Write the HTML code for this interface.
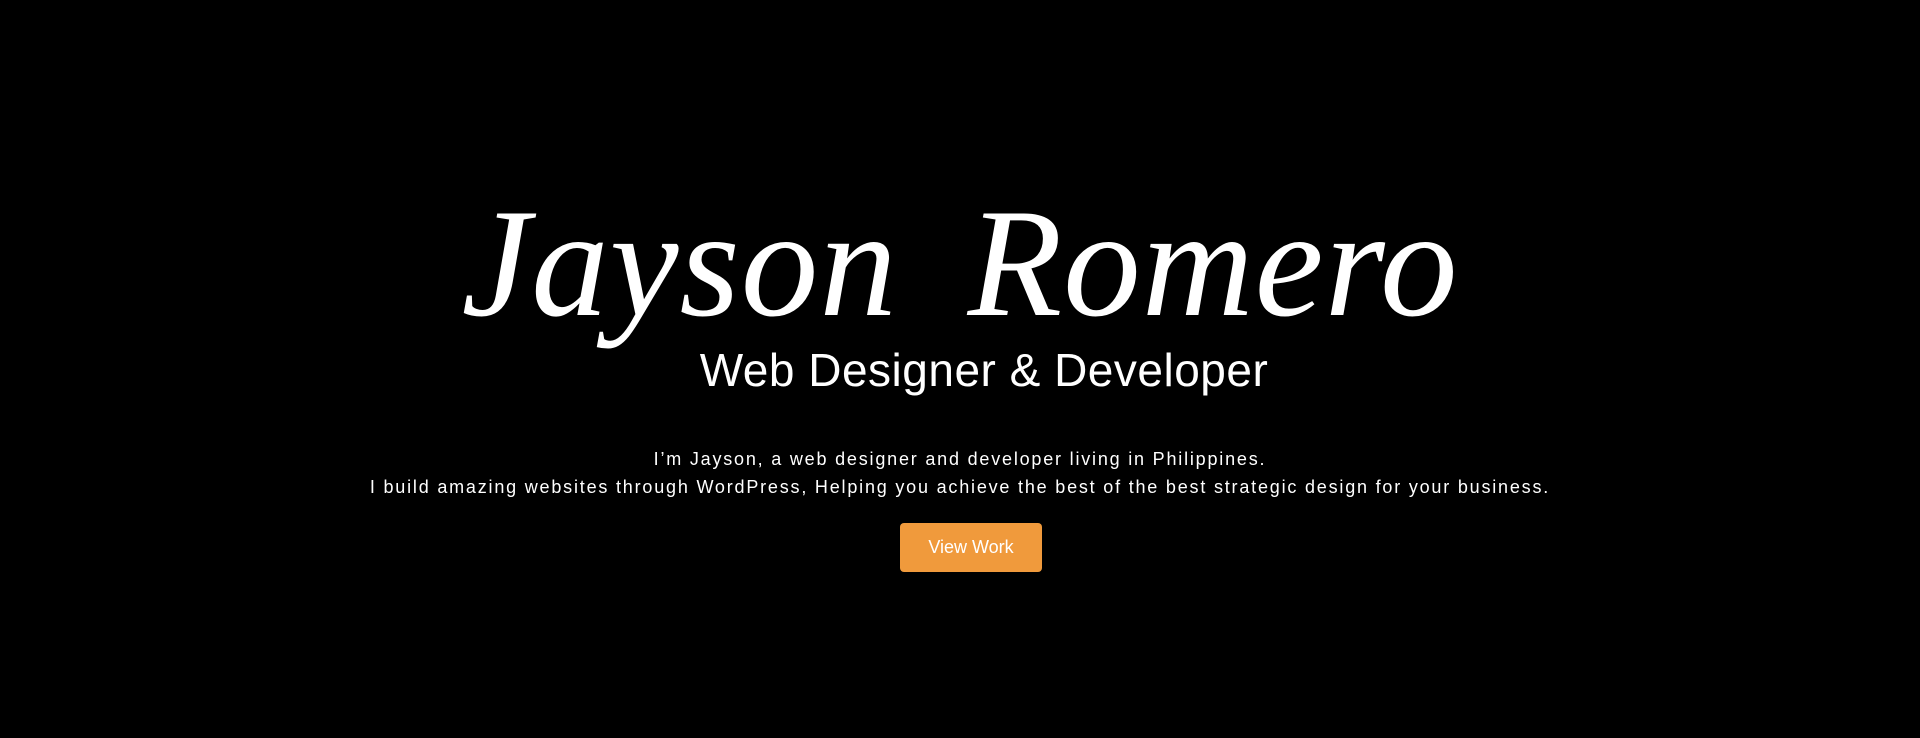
<!DOCTYPE html>
<html><head><meta charset="utf-8"><style>
html,body{margin:0;padding:0;background:#000;width:1920px;height:738px;overflow:hidden}
.t{position:absolute;left:0;width:1920px;text-align:center;color:#fff}
.name{top:168px;font-family:"Liberation Serif",serif;font-style:italic;font-size:155px;line-height:190px;letter-spacing:1px;word-spacing:30px}
.sub{top:340px;left:24px;font-family:"Liberation Sans",sans-serif;font-size:46px;line-height:60px;letter-spacing:0.5px}
.p{top:445px;font-family:"Liberation Sans",sans-serif;font-size:18px;line-height:28px;letter-spacing:1.8px}
.btn{position:absolute;left:900px;top:523px;width:142px;height:49px;background:#f09a3c;border-radius:4px;color:#fff;font-family:"Liberation Sans",sans-serif;font-size:18px;line-height:49px;text-align:center}
</style></head><body>
<div class="t name">Jayson Romero</div>
<div class="t sub">Web Designer &amp; Developer</div>
<div class="t p">I’m Jayson, a web designer and developer living in Philippines.<br>I build amazing websites through WordPress, Helping you achieve the best of the best strategic design for your business.</div>
<div class="btn">View Work</div>
</body></html>
